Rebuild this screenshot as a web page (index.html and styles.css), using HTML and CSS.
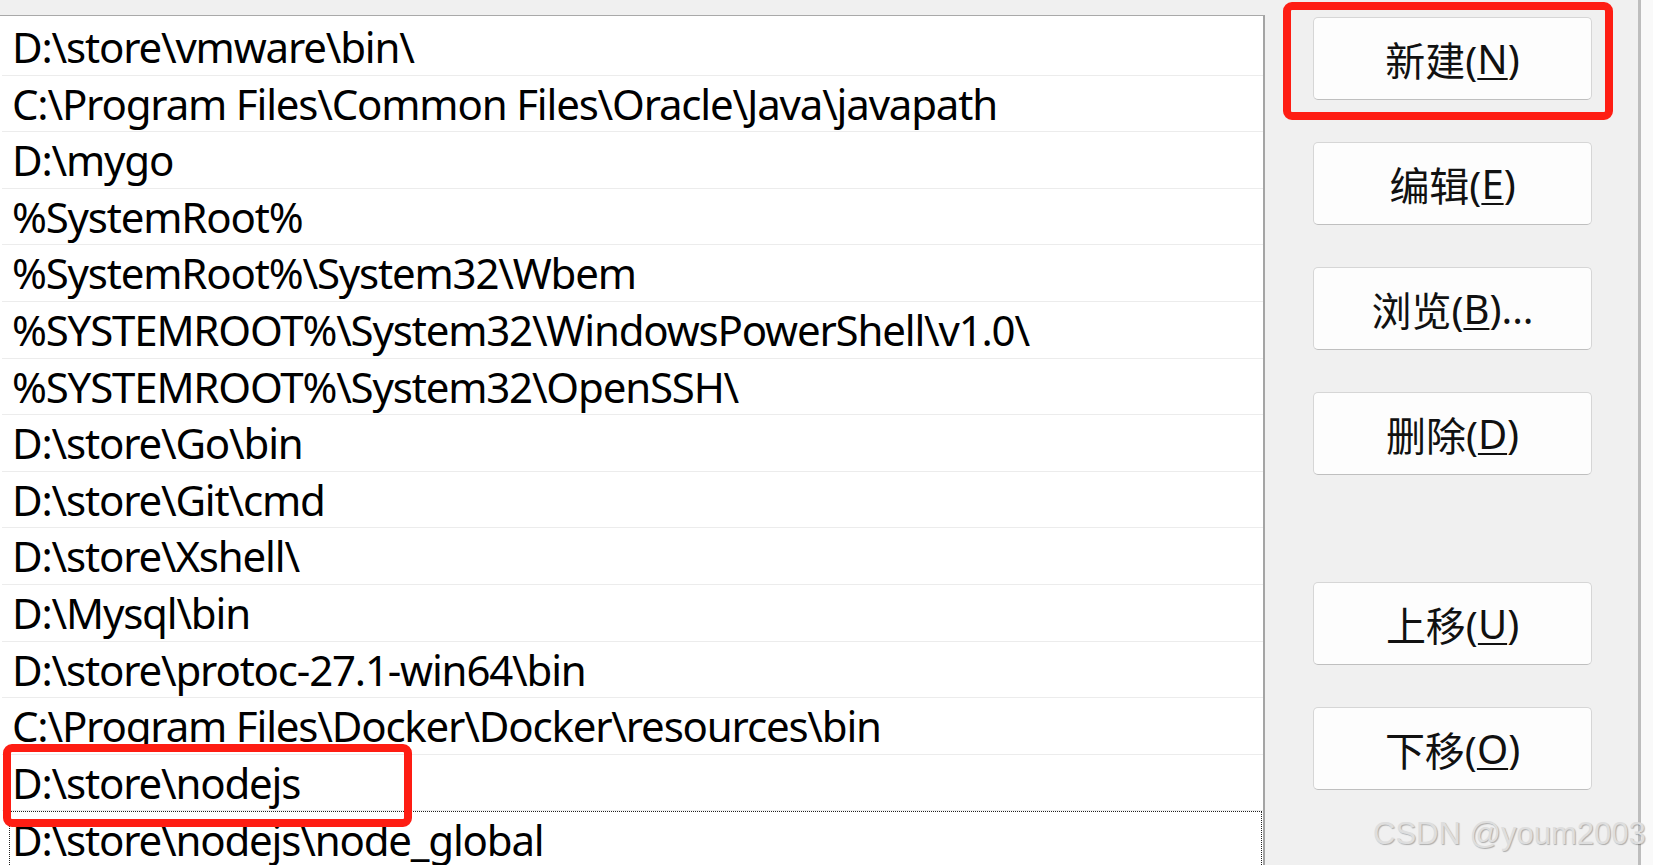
FILE: index.html
```html
<!DOCTYPE html>
<html lang="zh-CN">
<head>
<meta charset="utf-8">
<title>编辑环境变量</title>
<link rel="stylesheet" href="styles.css">
</head>
<body>
<div class="screen">
  <div class="dialog">
    <div class="list">
      <div class="row">D:\store\vmware\bin\</div>
      <div class="row">C:\Program Files\Common Files\Oracle\Java\javapath</div>
      <div class="row">D:\mygo</div>
      <div class="row">%SystemRoot%</div>
      <div class="row">%SystemRoot%\System32\Wbem</div>
      <div class="row">%SYSTEMROOT%\System32\WindowsPowerShell\v1.0\</div>
      <div class="row">%SYSTEMROOT%\System32\OpenSSH\</div>
      <div class="row">D:\store\Go\bin</div>
      <div class="row">D:\store\Git\cmd</div>
      <div class="row">D:\store\Xshell\</div>
      <div class="row">D:\Mysql\bin</div>
      <div class="row">D:\store\protoc-27.1-win64\bin</div>
      <div class="row">C:\Program Files\Docker\Docker\resources\bin</div>
      <div class="row">D:\store\nodejs</div>
      <div class="row row-focus">D:\store\nodejs\node_global</div>
    </div>
    <div class="buttons">
      <div class="btn">新建(<u>N</u>)</div>
      <div class="btn">编辑(<u>E</u>)</div>
      <div class="btn">浏览(<u>B</u>)...</div>
      <div class="btn">删除(<u>D</u>)</div>
      <div class="btn btn-apart">上移(<u>U</u>)</div>
      <div class="btn">下移(<u>O</u>)</div>
    </div>
  </div>
  <div class="edge"></div>
  <div class="outside"></div>
  <div class="mark mark-new"></div>
  <div class="mark mark-node"></div>
  <div class="watermark">CSDN @youm2003</div>
</div>
</body>
</html>
```

FILE: styles.css
```css
html, body {
  margin: 0;
  padding: 0;
  background: #f0f0f0;
}

.screen {
  position: relative;
  width: 1653px;
  height: 865px;
  overflow: hidden;
  display: flex;
  background: #f0f0f0;
  font-family: "Noto Sans", "Noto Sans CJK SC", sans-serif;
  color: #000;
}

.dialog {
  width: 1638px;
  display: flex;
  align-items: flex-start;
}

.list {
  margin-top: 15px;
  width: 1263px;
  height: 860px;
  background: #fff;
  border-top: 1px solid #a9a9a9;
  border-right: 2px solid #a4a4a4;
  padding-top: 3px;
  box-sizing: content-box;
  overflow: hidden;
}

.row {
  height: 55.6px;
  line-height: 55.6px;
  font-size: 42px;
  letter-spacing: -1.18px;
  padding-left: 10px;
  margin-left: 2px;
  border-bottom: 1px solid #ececec;
  white-space: nowrap;
}

.row-focus {
  margin-left: 9px;
  margin-right: 1px;
  padding-left: 2px;
  border: 1px dotted #222;
}

.buttons {
  margin-left: 48px;
  width: 279px;
  padding-top: 17px;
  display: flex;
  flex-direction: column;
  gap: 42px;
}

.btn {
  height: 81px;
  box-sizing: content-box;
  background: #fdfdfd;
  border: 1px solid #d6d6d6;
  border-bottom-color: #bfbfbf;
  border-radius: 5px;
  display: flex;
  align-items: center;
  justify-content: center;
  font-size: 40px;
  color: #111;
}

.btn u {
  text-decoration-thickness: 2px;
  text-underline-offset: 4px;
}

.btn-apart {
  margin-top: 65px;
}

.edge {
  width: 3px;
  background: #bdbdbd;
}

.outside {
  flex: 1;
  background: #f9f9f9;
}

.mark {
  position: absolute;
  border: 8px solid #fe1d13;
  border-radius: 9px;
  box-sizing: border-box;
}

.mark-new {
  left: 1283px;
  top: 2px;
  width: 330px;
  height: 118px;
}

.mark-node {
  left: 3px;
  top: 744px;
  width: 409px;
  height: 83px;
}

.watermark {
  position: absolute;
  left: 1373px;
  top: 814px;
  font-family: "Liberation Sans", Arial, sans-serif;
  font-size: 31px;
  line-height: 40px;
  color: #dedede;
  text-shadow: 1px 1px 1px rgba(0, 0, 0, 0.28);
  white-space: nowrap;
}
```
